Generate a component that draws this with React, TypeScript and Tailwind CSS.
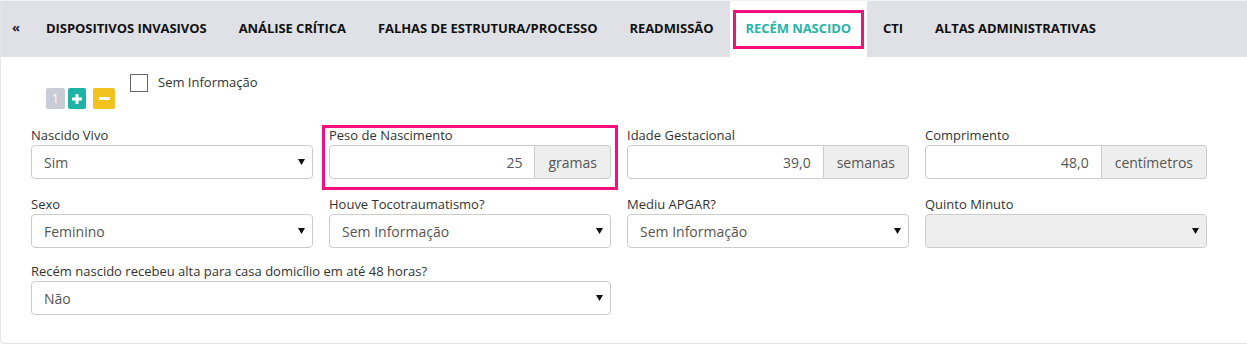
import React from "react";

const tabs = [
  "DISPOSITIVOS INVASIVOS",
  "ANÁLISE CRÍTICA",
  "FALHAS DE ESTRUTURA/PROCESSO",
  "READMISSÃO",
  "RECÉM NASCIDO",
  "CTI",
  "ALTAS ADMINISTRATIVAS",
];

function Caret() {
  return (
    <svg width="7" height="6" viewBox="0 0 7 6" className="shrink-0">
      <polygon points="0,0 7,0 3.5,6" fill="#111" />
    </svg>
  );
}

function Label({ children }: { children: React.ReactNode }) {
  return <div className="h-[19px] text-[13px] leading-[19px] text-[#333]">{children}</div>;
}

function Select({ value, disabled }: { value: string; disabled?: boolean }) {
  return (
    <div
      className={`flex h-[34px] items-center justify-between rounded-[4px] border border-[#ccc] pl-3 pr-[7px] text-[14px] text-[#555] ${
        disabled ? "bg-[#eee]" : "bg-white"
      }`}
    >
      <span>{value}</span>
      <Caret />
    </div>
  );
}

function InputAddon({ value, addon }: { value: string; addon: string }) {
  return (
    <div className="flex h-[34px] text-[14px] text-[#555]">
      <div className="flex flex-1 items-center justify-end rounded-l-[4px] border border-[#ccc] bg-white px-3">
        {value}
      </div>
      <div className="flex items-center rounded-r-[4px] border border-l-0 border-[#ccc] bg-[#eee] px-[13px]">
        {addon}
      </div>
    </div>
  );
}

export default function App() {
  return (
    <div className="h-[345px] w-[1247px] overflow-hidden bg-white font-['Open_Sans',sans-serif]">
      <div className="h-[344px] rounded-bl-[4px] border-b border-l border-[#e6e6ea]">
        <div className="h-px bg-[#f3f3f5]" />
        <div className="flex h-[56px] items-stretch bg-[#e0e1e6]">
          <div className="w-[29px] pl-[11px] pt-[20px] text-[13px] font-bold leading-none text-[#1b1f3b]">«</div>
          {tabs.map((t) =>
            t === "RECÉM NASCIDO" ? (
              <div key={t} className="flex items-center bg-white px-[3px]">
                <div className="flex h-[39px] items-center border-[3px] border-[#f70f7d] px-[10px] text-[13px] font-bold tracking-[-0.06px] text-[#26b5a9]">
                  {t}
                </div>
              </div>
            ) : (
              <div key={t} className="flex items-center px-4 text-[13px] font-bold tracking-[-0.06px] text-[#111]">
                {t}
              </div>
            )
          )}
        </div>

        <div className="flex items-start pl-[45px] pt-[16px]">
          <div className="mt-[15px] flex gap-[3px]">
            <div className="flex h-[21px] w-[19px] items-center justify-center rounded-[2px] bg-[#c9ccd5] text-[12px] text-white">
              1
            </div>
            <div className="flex h-[21px] w-[18px] items-center justify-center rounded-[2px] bg-[#1fb3a6]">
              <svg width="10" height="10" viewBox="0 0 10 10">
                <rect x="3.5" y="0" width="3" height="10" fill="#fff" />
                <rect x="0" y="3.5" width="10" height="3" fill="#fff" />
              </svg>
            </div>
            <div className="ml-[4px] flex h-[21px] w-[22px] items-center justify-center rounded-[2px] bg-[#f3c21f]">
              <svg width="11" height="3" viewBox="0 0 11 3">
                <rect x="0" y="0" width="11" height="3" fill="#fff" />
              </svg>
            </div>
          </div>
          <div className="ml-[15px] flex items-center gap-[10px]">
            <div className="h-[18px] w-[18px] border border-[#666] bg-white" />
            <span className="text-[13px] text-[#333]">Sem Informação</span>
          </div>
        </div>

        <div className="grid grid-cols-[282px_282px_282px_282px] gap-x-4 pl-[30px] pt-[17px]">
          <div>
            <Label>Nascido Vivo</Label>
            <Select value="Sim" />
          </div>
          <div className="relative">
            <div className="pointer-events-none absolute -top-[1px] -bottom-[11px] -left-[7px] -right-[7px] border-[3px] border-[#f70f7d]" />
            <Label>Peso de Nascimento</Label>
            <InputAddon value="25" addon="gramas" />
          </div>
          <div>
            <Label>Idade Gestacional</Label>
            <InputAddon value="39,0" addon="semanas" />
          </div>
          <div>
            <Label>Comprimento</Label>
            <InputAddon value="48,0" addon="centímetros" />
          </div>

          <div className="mt-4">
            <Label>Sexo</Label>
            <Select value="Feminino" />
          </div>
          <div className="mt-4">
            <Label>Houve Tocotraumatismo?</Label>
            <Select value="Sem Informação" />
          </div>
          <div className="mt-4">
            <Label>Mediu APGAR?</Label>
            <Select value="Sem Informação" />
          </div>
          <div className="mt-4">
            <Label>Quinto Minuto</Label>
            <Select value="" disabled />
          </div>

          <div className="col-span-2 mt-[14px]">
            <Label>Recém nascido recebeu alta para casa domicílio em até 48 horas?</Label>
            <Select value="Não" />
          </div>
        </div>
      </div>
    </div>
  );
}
